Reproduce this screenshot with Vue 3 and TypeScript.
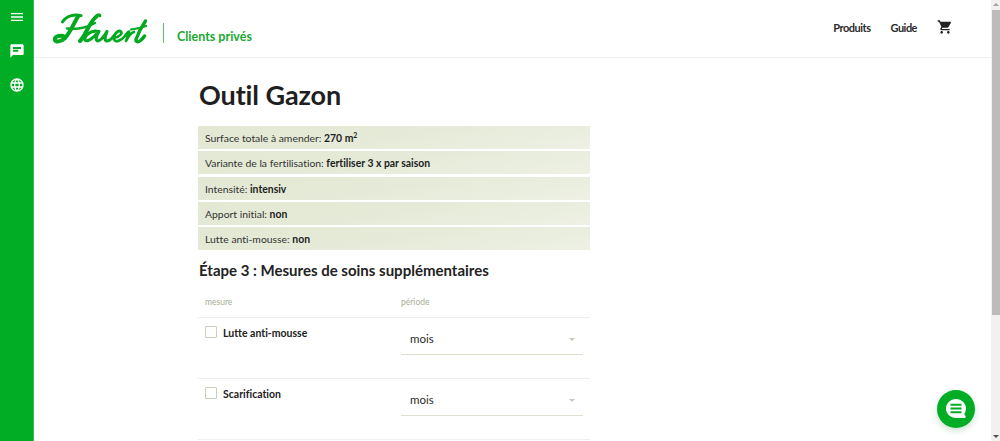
<script setup lang="ts">
interface Summary { label: string; value: string; sup?: string }
const summary: Summary[] = [
  { label: 'Surface totale à amender:', value: '270 m', sup: '2' },
  { label: 'Variante de la fertilisation:', value: 'fertiliser 3 x par saison' },
  { label: 'Intensité:', value: 'intensiv' },
  { label: 'Apport initial:', value: 'non' },
  { label: 'Lutte anti-mousse:', value: 'non' },
]
const measures: string[] = ['Lutte anti-mousse', 'Scarification']
</script>

<template>
  <div class="page">
    <aside class="rail">
      <svg class="rail-icon menu" viewBox="0 0 24 24"><path d="M3 18h18v-2H3v2zm0-5h18v-2H3v2zm0-7v2h18V6H3z" /></svg>
      <svg class="rail-icon chat" viewBox="0 0 24 24"><path fill-rule="evenodd" d="M20 2H4c-1.100 0-1.990.9-1.990 2L2 22l4-4h14c1.100 0 2-.9 2-2V4c0-1.100-.9-2-2-2zM6 6h12v3H6zM6 10h8v3H6z" /></svg>
      <svg class="rail-icon globe" viewBox="0 0 24 24"><path d="M11.99 2C6.47 2 2 6.48 2 12s4.47 10 9.99 10C17.52 22 22 17.52 22 12S17.52 2 11.99 2zm6.93 6h-2.95c-.32-1.25-.78-2.45-1.38-3.56 1.84.63 3.37 1.91 4.33 3.56zM12 4.04c.83 1.2 1.48 2.53 1.91 3.96h-3.82c.43-1.43 1.08-2.76 1.91-3.96zM4.26 14C4.1 13.36 4 12.69 4 12s.1-1.36.26-2h3.38c-.08.66-.14 1.32-.14 2 0 .68.06 1.34.14 2H4.26zm.82 2h2.95c.32 1.25.78 2.45 1.38 3.56-1.84-.63-3.37-1.9-4.33-3.56zm2.95-8H5.08c.96-1.66 2.49-2.93 4.33-3.56C8.81 5.55 8.35 6.75 8.03 8zM12 19.96c-.83-1.2-1.48-2.53-1.91-3.96h3.82c-.43 1.43-1.08 2.76-1.91 3.96zM14.34 14H9.66c-.09-.66-.16-1.32-.16-2 0-.68.07-1.35.16-2h4.68c.09.65.16 1.32.16 2 0 .68-.07 1.34-.16 2zm.25 5.56c.6-1.11 1.06-2.31 1.38-3.56h2.95c-.96 1.65-2.49 2.93-4.33 3.56zM16.36 14c.08-.66.14-1.32.14-2 0-.68-.06-1.34-.14-2h3.38c.16.64.26 1.31.26 2s-.1 1.36-.26 2h-3.38z" /></svg>
    </aside>

    <div class="main">
      <header class="topbar">
        <svg class="logo" viewBox="0 0 94 32" fill="none" stroke="#00a91f" stroke-linecap="round" stroke-linejoin="round" aria-label="Hauert">
          <path stroke-width="3" d="M9.500 9C13 3.500 20 1 28 2.600" />
          <path stroke-width="4" d="M25 3.500C21 10 17 20 12 25 8 29 2 29.500 1.800 26.500 1.600 24 5 22 10 23" />
          <path stroke-width="4" d="M44 3C40 6 37 11 33.500 18 31.500 22 29.500 25.500 27 28" />
          <path stroke-width="2.400" d="M44 2.500C46 .8 47.500 1.500 47 3M14 15.500C22 16.500 33 15 42 10" />
          <path stroke-width="3.100" d="M45 18.500C38 16.500 31 23 32 27 34 30 41 24 46 18.500 43 23 42 28 45 28 49 27 52 22 54 18.500 52 23 51 28 54 28 57 28 59 25 61 23" />
          <path stroke-width="2.700" d="M61 25C66 24.500 70 20 68 18.500 65 16.500 60 22 61 26 62 30 68 28 72 23 74 20 75 18.500 76 18.500 77 19 74 25 73 28 75 24 77 20 81 19" />
          <path stroke-width="3.400" d="M92.500 8C89 13 84.500 22 83 26.500 82.500 29 85 29.500 87.500 27.500 89.500 26 90.500 24.500 91.500 23" />
          <path stroke-width="2.200" d="M78 16.500C83 16 88 15 93 13" />
        </svg>
        <span class="divider"></span>
        <span class="section">Clients privés</span>
        <nav class="nav">
          <a>Produits</a>
          <a>Guide</a>
          <svg class="cart" viewBox="0 0 24 24"><path d="M7 18c-1.1 0-1.99.9-1.99 2S5.9 22 7 22s2-.9 2-2-.9-2-2-2zM1 2v2h2l3.6 7.59-1.35 2.45c-.16.28-.25.61-.25.96 0 1.1.9 2 2 2h12v-2H7.42c-.14 0-.25-.11-.25-.25l.03-.12.9-1.63h7.45c.75 0 1.41-.41 1.75-1.03l3.58-6.47c.08-.14.12-.31.12-.48 0-.55-.45-1-1-1H5.21l-.94-2H1zm16 16c-1.1 0-1.99.9-1.99 2s.89 2 1.99 2 2-.9 2-2-.9-2-2-2z" /></svg>
        </nav>
      </header>

      <main class="content">
        <h1>Outil Gazon</h1>
        <div class="summary">
          <div v-for="row in summary" :key="row.label" class="summary-row">
            {{ row.label }} <b>{{ row.value }}<sup v-if="row.sup">{{ row.sup }}</sup></b>
          </div>
        </div>
        <h2>Étape 3 : Mesures de soins supplémentaires</h2>
        <div class="grid head">
          <span>mesure</span>
          <span>période</span>
        </div>
        <div v-for="m in measures" :key="m" class="grid row">
          <label class="check"><span class="box"></span>{{ m }}</label>
          <div class="select">
            <span>mois</span>
            <span class="caret"></span>
          </div>
        </div>
      </main>

      <button class="fab" aria-label="Chat">
        <svg viewBox="0 0 24 24">
          <path d="M12 2C6.500 2 2 6.300 2 11.500S6.500 21 12 21h8.500c1 0 1.500-1 1-1.800l-1.300-2.100C21.300 15.600 22 13.600 22 11.500 22 6.300 17.500 2 12 2z" fill="#fff" />
          <path d="M6.500 6.800h11v2h-11zM6.500 10.500h11v2h-11zM6.500 14.200h11v2h-11z" fill="#00ad25" />
        </svg>
      </button>
    </div>

    <div class="scrollbar">
      <span class="arrow up"></span>
      <span class="thumb"></span>
      <span class="arrow down"></span>
    </div>
  </div>
</template>

<style>
html, body { margin: 0; overflow: hidden; background: #fff; }
</style>

<style scoped>
.page {
  display: flex;
  height: 441px;
  overflow: hidden;
  font-family: Lato, "Noto Sans", sans-serif;
  font-variant-ligatures: none;
  color: #222;
}
.rail {
  width: 33px;
  flex: none;
  background: #00ad25;
  border-right: 1px solid #33c04f;
  display: flex;
  flex-direction: column;
  align-items: center;
  padding-top: 9px;
  gap: 18px;
  box-sizing: content-box;
}
.rail-icon { width: 16px; height: 16px; fill: #fff; flex: none; }
.main { flex: 1; min-width: 0; position: relative; }
.topbar {
  height: 58px;
  box-sizing: border-box;
  border-bottom: 1px solid #f0f0f0;
  display: flex;
  align-items: flex-start;
  padding-left: 19px;
  padding-top: 13px;
}
.logo { width: 94px; height: 32px; flex: none; }
.divider {
  width: 1px;
  height: 20px;
  margin: 10px 0 0 16px;
  background: #5cc36f;
  flex: none;
}
.section {
  margin: 15px 0 0 13px;
  font-size: 12.500px;
  line-height: 18px;
  font-weight: 700;
  color: #18a92f;
}
.nav {
  margin-left: auto;
  display: flex;
  align-items: center;
  gap: 20px;
  padding: 6px 38px 0 0;
  font-size: 11px;
  line-height: 18px;
  font-weight: 700;
  letter-spacing: -0.5px;
  color: #2b2b2b;
}
.cart { width: 16px; height: 16px; fill: #222; margin-top: -3px; }
.content { margin-left: 164px; width: 392px; }
h1 {
  margin: 19px 0 0 1px;
  font-size: 27px;
  line-height: 36px;
  font-weight: 700;
  letter-spacing: -0.1px;
  color: #1f1f1f;
}
.summary { margin-top: 13px; display: flex; flex-direction: column; gap: 2.3px; }
.summary-row {
  height: 23px;
  padding-left: 7px;
  font-size: 10.400px;
  line-height: 24px;
  color: #333;
  background: linear-gradient(170deg, #e2e8d3 0%, #e6ebd9 50%, #edf0e3 100%);
}
.summary-row b { color: #1d1d1d; font-weight: 700; }
.summary-row sup { font-size: 7px; line-height: 0; }
h2 {
  margin: 10px 0 0 1px;
  font-size: 15px;
  line-height: 20px;
  font-weight: 700;
  color: #222;
}
.grid { display: grid; grid-template-columns: 196px 196px; }
.head {
  margin-top: 12px;
  height: 26px;
  padding-left: 7px;
  grid-template-columns: 196px 189px;
  font-size: 8.500px;
  line-height: 20px;
  color: #a6ad98;
  border-bottom: 1px solid #eef0ea;
  box-sizing: border-box;
}
.row {
  height: 60px;
  box-sizing: content-box;
  border-bottom: 1px solid #eef0ea;
}
.check {
  display: flex;
  align-items: flex-start;
  padding: 8px 0 0 7px;
  font-size: 10.500px;
  line-height: 14px;
  font-weight: 700;
  color: #222;
}
.box {
  width: 10px;
  height: 10px;
  margin-right: 6px;
  border: 1px solid #c9cfba;
  border-radius: 1px;
  flex: none;
}
.select {
  margin: 6px 7px 0 7px;
  height: 31px;
  box-sizing: border-box;
  padding: 7px 8px 0 9px;
  display: flex;
  justify-content: space-between;
  font-size: 11.500px;
  line-height: 16px;
  color: #2a2a2a;
  border-bottom: 1px solid #dde2d0;
}
.caret {
  width: 0;
  height: 0;
  margin-top: 7px;
  border-left: 3px solid transparent;
  border-right: 3px solid transparent;
  border-top: 3px solid #c3c8b8;
}
.fab {
  position: absolute;
  right: 16px;
  bottom: 13px;
  width: 38px;
  height: 38px;
  border: 0;
  padding: 0;
  border-radius: 50%;
  background: #00ad25;
  box-shadow: 0 3px 6px rgba(0, 120, 20, 0.2);
  display: flex;
  align-items: center;
  justify-content: center;
}
.fab svg { width: 24px; height: 24px; }
.scrollbar {
  width: 9px;
  flex: none;
  background: #f1f1f1;
  position: relative;
}
.thumb {
  position: absolute;
  top: 10px;
  left: 1px;
  width: 8px;
  height: 305px;
  background: #bcbcbc;
}
.arrow {
  position: absolute;
  left: 2px;
  width: 0;
  height: 0;
  border-left: 3px solid transparent;
  border-right: 3px solid transparent;
}
.arrow.up { top: 3px; border-bottom: 3px solid #a3a3a3; }
.arrow.down { bottom: 3px; border-top: 3px solid #505050; }
</style>
